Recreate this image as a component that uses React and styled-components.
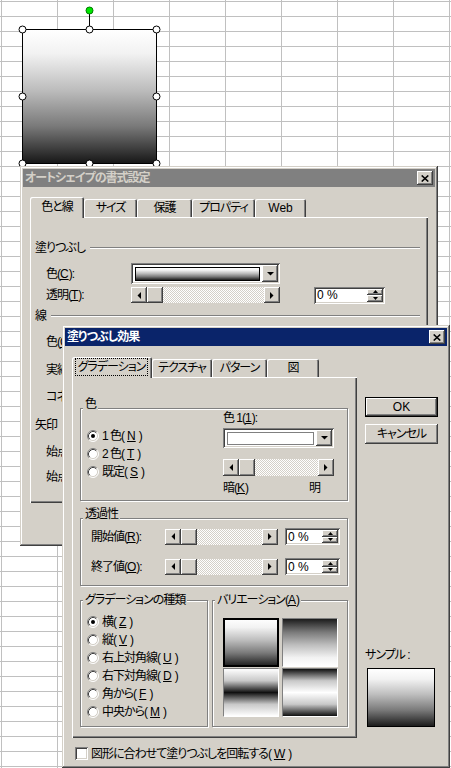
import React from "react";
import styled, { createGlobalStyle } from "styled-components";

const FACE = "#d4d0c8";
const raised = `inset -1px -1px #404040, inset 1px 1px #ffffff, inset -2px -2px #808080, inset 2px 2px ${FACE}`;
const sunken = `inset 1px 1px #808080, inset -1px -1px #ffffff, inset 2px 2px #404040, inset -2px -2px ${FACE}`;
const dither = `repeating-conic-gradient(#ffffff 0 25%, ${FACE} 0 50%) 0 0 / 2px 2px`;

const FILL_DOWN = "linear-gradient(to bottom, #ffffff 0%, #f2f2f2 18%, #bdbdbd 45%, #7a7a7a 72%, #1c1c1c 100%)";
const FILL_UP = "linear-gradient(to top, #ffffff 0%, #f2f2f2 18%, #bdbdbd 45%, #7a7a7a 72%, #1c1c1c 100%)";
const FILL_MID_DARK = "linear-gradient(to bottom, #ffffff 0%, #c8c8c8 25%, #101010 50%, #c8c8c8 75%, #ffffff 100%)";
const FILL_MID_LIGHT = "linear-gradient(to bottom, #101010 0%, #c8c8c8 25%, #ffffff 50%, #c8c8c8 75%, #101010 100%)";

const GlobalStyle = createGlobalStyle`
  html, body { margin: 0; padding: 0; }
  body {
    font-family: "Liberation Sans", "Noto Sans CJK JP", sans-serif;
    font-size: 12px;
    line-height: 14px;
    color: #000;
    letter-spacing: -1px;
    font-feature-settings: "palt" 1;
    font-variant-east-asian: proportional-width;
    text-autospace: no-autospace;
  }
  * { box-sizing: border-box; }
`;

const Desktop = styled.div`
  position: relative;
  width: 451px;
  height: 768px;
  overflow: hidden;
  background-color: #fff;
  background-image:
    linear-gradient(to right, transparent 1px, #c0c0c0 1px, #c0c0c0 2px, transparent 2px),
    linear-gradient(to bottom, transparent 1px, #c0c0c0 1px, #c0c0c0 2px, transparent 2px);
  background-size: 56px 100%, 100% 15px;
`;

const ShapeCanvas = styled.svg`
  position: absolute;
  left: 0;
  top: 0;
`;

const Window = styled.div`
  position: absolute;
  left: ${p => p.$x}px;
  top: ${p => p.$y}px;
  width: ${p => p.$w}px;
  height: ${p => p.$h}px;
  padding: 3px;
  background: ${FACE};
  box-shadow: inset -1px -1px #404040, inset 1px 1px ${FACE}, inset -2px -2px #808080, inset 2px 2px #ffffff;
  display: flex;
  flex-direction: column;
`;

const TitleBar = styled.div`
  flex: none;
  height: 18px;
  display: flex;
  align-items: center;
  justify-content: space-between;
  padding: 0 2px;
  background: ${p => (p.$active ? "#0a246a" : "#808080")};
  color: ${p => (p.$active ? "#ffffff" : FACE)};
  font-weight: bold;
`;

const CloseBox = styled.div`
  width: 16px;
  height: 14px;
  background: ${FACE};
  box-shadow: ${raised};
  display: flex;
  align-items: center;
  justify-content: center;
  padding-right: 1px;
`;

const DialogBody = styled.div`
  flex: 1;
  display: flex;
  flex-direction: column;
  padding: ${p => p.$pt}px 0 0 7px;
`;

const TabRow = styled.div`
  display: flex;
  align-items: flex-end;
  height: 20px;
  position: relative;
  z-index: 1;
`;

const Tab = styled.div`
  flex: none;
  width: ${p => p.$w}px;
  height: ${p => (p.$active ? 21 : 18)}px;
  margin-bottom: ${p => (p.$active ? -1 : 0)}px;
  padding: ${p => (p.$active ? "1px 0 2px" : "0")};
  display: flex;
  align-items: center;
  justify-content: center;
  background: ${FACE};
  border-radius: 2px 2px 0 0;
  box-shadow: inset 1px 1px #ffffff, inset -1px 0 #404040, inset -2px 0 #808080;
  white-space: nowrap;
`;

const LatinText = styled.span`
  letter-spacing: 0;
`;

const FocusRing = styled.span`
  flex: 1;
  align-self: stretch;
  margin: 0 4px 0 3px;
  border: 1px dotted #000;
  display: flex;
  align-items: center;
  justify-content: center;
`;

const TabPanel = styled.div`
  flex: none;
  width: ${p => p.$w}px;
  height: ${p => p.$h}px;
  background: ${FACE};
  box-shadow: inset 1px 1px #ffffff, inset -1px -1px #404040, inset -2px -2px #808080;
  padding: ${p => p.$pad};
  display: flex;
  flex-direction: column;
`;

const SectionHead = styled.div`
  display: flex;
  align-items: center;
  height: 14px;
  flex: none;
  margin-top: ${p => p.$mt || 0}px;
  white-space: nowrap;
  &::after {
    content: "";
    flex: 1;
    margin-left: 5px;
    border-top: 1px solid #808080;
    border-bottom: 1px solid #ffffff;
  }
`;

const FormRow = styled.div`
  display: flex;
  align-items: center;
  flex: none;
  height: ${p => p.$h}px;
  margin-top: ${p => p.$mt || 0}px;
  padding-left: ${p => p.$pl || 0}px;
`;

const FieldLabel = styled.span`
  flex: none;
  width: ${p => p.$w}px;
  white-space: nowrap;
`;

const Key = styled.span`
  text-decoration: underline;
  text-underline-offset: 1px;
  letter-spacing: 0;
`;

const ComboFrame = styled.div`
  flex: none;
  width: ${p => p.$w}px;
  height: ${p => p.$h}px;
  margin-top: ${p => p.$mt || 0}px;
  padding: 2px;
  background: #fff;
  box-shadow: ${sunken};
  display: flex;
`;

const ComboValue = styled.div`
  flex: 1;
  margin: 2px 2px 1px 2px;
  border: 1px solid ${p => p.$edge};
  background: ${p => p.$fill};
`;

const BevelButton = styled.div`
  flex: none;
  width: 16px;
  background: ${FACE};
  box-shadow: ${raised};
  display: flex;
  align-items: center;
  justify-content: center;
`;

const ScrollFrame = styled.div`
  flex: none;
  width: ${p => p.$w}px;
  height: ${p => p.$h}px;
  margin-top: ${p => p.$mt || 0}px;
  display: flex;
`;

const ScrollTrack = styled.div`
  flex: 1;
  background: ${dither};
`;

const SpinFrame = styled.div`
  flex: none;
  width: ${p => p.$w}px;
  height: ${p => p.$h}px;
  margin-left: ${p => p.$ml || 0}px;
  padding: 2px;
  background: #fff;
  box-shadow: ${sunken};
  display: flex;
`;

const SpinText = styled.span`
  flex: 1;
  display: flex;
  align-items: center;
  padding-left: 1px;
  white-space: nowrap;
  letter-spacing: 0;
`;

const SpinButtons = styled.div`
  flex: none;
  width: 16px;
  display: flex;
  flex-direction: column;
`;

const SpinButton = styled(BevelButton)`
  flex: 1;
  width: auto;
`;

const Group = styled.div`
  position: relative;
  flex: none;
  width: ${p => (p.$w ? `${p.$w}px` : "auto")};
  height: ${p => p.$h}px;
  margin-top: ${p => p.$mt || 0}px;
  padding: ${p => p.$pad || 0};
  border: 1px solid #808080;
  box-shadow: inset 1px 1px #ffffff, 1px 1px #ffffff;
`;

const Legend = styled.span`
  position: absolute;
  left: 2px;
  top: ${p => p.$top}px;
  padding: 0 2px;
  background: ${FACE};
  white-space: nowrap;
`;

const ColorGroupBody = styled.div`
  display: flex;
`;

const RadioList = styled.div`
  flex: none;
  width: ${p => (p.$w ? `${p.$w}px` : "auto")};
  padding: ${p => p.$pt}px 0 0 ${p => p.$pl || 0}px;
  display: flex;
  flex-direction: column;
`;

const RadioRow = styled.label`
  display: flex;
  align-items: center;
  gap: 3px;
  height: 18px;
  white-space: nowrap;
`;

const ColorPicker = styled.div`
  flex: none;
  width: 111px;
  padding-top: 2px;
  display: flex;
  flex-direction: column;
`;

const ScaleLabels = styled.div`
  display: flex;
  justify-content: space-between;
  margin-top: 5px;
  padding-right: 14px;
`;

const TransparencyBody = styled.div`
  display: flex;
  flex-direction: column;
  gap: 13px;
`;

const GroupPair = styled.div`
  display: flex;
  gap: 4px;
  margin-top: 14px;
`;

const VariationGrid = styled.div`
  display: grid;
  grid-template-columns: 56px 56px;
  grid-auto-rows: 49px;
  column-gap: 3px;
  row-gap: 1px;
`;

const VariationTile = styled.div`
  background: ${p => p.$fill};
  border: 1px solid;
  border-color: ${p => (p.$selected ? "#000" : "#808080 #ffffff #ffffff #808080")};
  box-shadow: ${p => (p.$selected ? "inset 0 0 0 1px #000" : "none")};
`;

const ContentRow = styled.div`
  display: flex;
  gap: 8px;
`;

const TabColumn = styled.div`
  display: flex;
  flex-direction: column;
`;

const SideColumn = styled.div`
  width: 73px;
  display: flex;
  flex-direction: column;
  padding: 40px 0 11px;
`;

const PushButton = styled.div`
  height: 20px;
  margin-top: ${p => p.$mt || 0}px;
  display: flex;
  align-items: center;
  justify-content: center;
  background: ${FACE};
  box-shadow: ${p =>
    p.$default
      ? "inset 0 0 0 1px #000, inset -2px -2px #404040, inset 2px 2px #ffffff, inset -3px -3px #808080"
      : raised};
`;

const Spacer = styled.div`
  flex: 1;
`;

const SampleBox = styled.div`
  width: 68px;
  height: 59px;
  margin: 6px 0 0 2px;
  border: 1px solid #000;
  background: ${FILL_DOWN};
`;

const CheckRow = styled.label`
  display: flex;
  align-items: center;
  gap: 3px;
  margin-top: 9px;
  padding-left: 3px;
  height: 13px;
  white-space: nowrap;
`;

const CheckBox = styled.span`
  flex: none;
  width: 13px;
  height: 13px;
  background: #fff;
  box-shadow: ${sunken};
`;

function CloseGlyph() {
  return (
    <svg width="8" height="7" viewBox="0 0 8 7">
      <path d="M0.7 0.5 L7.3 6.5 M7.3 0.5 L0.7 6.5" stroke="#000" strokeWidth="1.6" />
    </svg>
  );
}

function Arrow({ dir }) {
  const shapes = {
    left: [4, 7, "4,0 4,7 0.5,3.5"],
    right: [4, 7, "0,0 0,7 3.5,3.5"],
    down: [7, 4, "0,0 7,0 3.5,3.5"],
  };
  const [w, h, pts] = shapes[dir];
  return (
    <svg width={w} height={h} viewBox={`0 0 ${w} ${h}`}>
      <polygon points={pts} fill="#000" />
    </svg>
  );
}

function SmallArrow({ up }) {
  return (
    <svg width="5" height="3" viewBox="0 0 5 3">
      <polygon points={up ? "0,3 5,3 2.5,0" : "0,0 5,0 2.5,3"} fill="#000" />
    </svg>
  );
}

function Radio({ checked }) {
  return (
    <svg width="12" height="12" viewBox="0 0 12 12" style={{ flex: "none" }}>
      <circle cx="6" cy="6" r="5" fill="#fff" />
      <path d="M2.11 9.89 A5.5 5.5 0 0 1 9.89 2.11" fill="none" stroke="#808080" />
      <path d="M2.82 9.18 A4.5 4.5 0 0 1 9.18 2.82" fill="none" stroke="#404040" />
      <path d="M9.89 2.11 A5.5 5.5 0 0 1 2.11 9.89" fill="none" stroke="#ffffff" />
      <path d="M9.18 2.82 A4.5 4.5 0 0 1 2.82 9.18" fill="none" stroke={FACE} />
      {checked && <circle cx="6" cy="6" r="2" fill="#000" />}
    </svg>
  );
}

function Combo({ w, h, mt, fill, edge }) {
  return (
    <ComboFrame $w={w} $h={h} $mt={mt}>
      <ComboValue $fill={fill} $edge={edge} />
      <BevelButton>
        <Arrow dir="down" />
      </BevelButton>
    </ComboFrame>
  );
}

function HScroll({ w, h, mt }) {
  return (
    <ScrollFrame $w={w} $h={h} $mt={mt}>
      <BevelButton>
        <Arrow dir="left" />
      </BevelButton>
      <BevelButton />
      <ScrollTrack />
      <BevelButton>
        <Arrow dir="right" />
      </BevelButton>
    </ScrollFrame>
  );
}

function Spin({ w, h, ml }) {
  return (
    <SpinFrame $w={w} $h={h} $ml={ml}>
      <SpinText>0 %</SpinText>
      <SpinButtons>
        <SpinButton>
          <SmallArrow up />
        </SpinButton>
        <SpinButton>
          <SmallArrow />
        </SpinButton>
      </SpinButtons>
    </SpinFrame>
  );
}

function AutoShape() {
  const handles = [
    [22.5, 29.5], [89.5, 29.5], [156.5, 29.5],
    [22.5, 96.5], [156.5, 96.5],
    [22.5, 163.5], [89.5, 163.5], [156.5, 163.5],
  ];
  return (
    <ShapeCanvas width="170" height="170" viewBox="0 0 170 170">
      <defs>
        <linearGradient id="shapeFill" x1="0" y1="0" x2="0" y2="1">
          <stop offset="0" stopColor="#ffffff" />
          <stop offset="0.18" stopColor="#f2f2f2" />
          <stop offset="0.45" stopColor="#bdbdbd" />
          <stop offset="0.72" stopColor="#7a7a7a" />
          <stop offset="1" stopColor="#161616" />
        </linearGradient>
      </defs>
      <rect x="22.5" y="29.5" width="134" height="134" fill="url(#shapeFill)" stroke="#000" />
      <line x1="89.5" y1="14" x2="89.5" y2="29.5" stroke="#000" />
      <circle cx="89.5" cy="10.5" r="3.5" fill="#00e600" stroke="#007a00" />
      {handles.map(([x, y]) => (
        <circle key={`${x}-${y}`} cx={x} cy={y} r="3.5" fill="#fff" stroke="#000" />
      ))}
    </ShapeCanvas>
  );
}

const GRADIENT_TYPES = [
  ["横", "Z", true],
  ["縦", "V"],
  ["右上対角線", "U"],
  ["右下対角線", "D"],
  ["角から", "F"],
  ["中央から", "M"],
];

export default function App() {
  return (
    <>
      <GlobalStyle />
      <Desktop>
        <AutoShape />

        <Window $x={20} $y={166} $w={418} $h={380}>
          <TitleBar>
            <span>オートシェイプの書式設定</span>
            <CloseBox>
              <CloseGlyph />
            </CloseBox>
          </TitleBar>
          <DialogBody $pt={10}>
            <TabRow>
              <Tab $w={54} $active>色と線</Tab>
              <Tab $w={53}>サイズ</Tab>
              <Tab $w={55}>保護</Tab>
              <Tab $w={63}>プロパティ</Tab>
              <Tab $w={51}><LatinText>Web</LatinText></Tab>
            </TabRow>
            <TabPanel $w={398} $h={286} $pad="24px 8px 0 5px">
              <SectionHead>塗りつぶし</SectionHead>
              <FormRow $h={21} $mt={8} $pl={11}>
                <FieldLabel $w={85}>色(<Key>C</Key>):</FieldLabel>
                <Combo w={149} h={21} fill={FILL_DOWN} edge="#000" />
              </FormRow>
              <FormRow $h={16} $mt={3} $pl={11}>
                <FieldLabel $w={85}>透明(<Key>T</Key>):</FieldLabel>
                <HScroll w={149} h={16} />
                <Spin w={71} h={17} ml={34} />
              </FormRow>
              <SectionHead $mt={6}>線</SectionHead>
              <FormRow $h={21} $mt={8} $pl={11}>
                <FieldLabel $w={85}>色(<Key>O</Key>):</FieldLabel>
                <Combo w={149} h={21} fill="#000" edge="#000" />
              </FormRow>
              <FormRow $h={21} $mt={7} $pl={11}>
                <FieldLabel $w={85}>実線(<Key>D</Key>):</FieldLabel>
                <Combo w={149} h={21} fill="#fff" edge="#fff" />
              </FormRow>
              <FormRow $h={21} $mt={6} $pl={11}>
                <FieldLabel $w={85}>コネクタ(<Key>N</Key>):</FieldLabel>
                <Combo w={149} h={21} fill="#fff" edge="#fff" />
              </FormRow>
              <SectionHead $mt={11}>矢印</SectionHead>
              <FormRow $h={21} $mt={9} $pl={11}>
                <FieldLabel $w={85}>始点のスタイル(<Key>B</Key>):</FieldLabel>
              </FormRow>
              <FormRow $h={21} $mt={4} $pl={11}>
                <FieldLabel $w={85}>始点のサイズ(<Key>I</Key>):</FieldLabel>
              </FormRow>
            </TabPanel>
          </DialogBody>
        </Window>

        <Window $x={62} $y={325} $w={388} $h={443}>
          <TitleBar $active>
            <span>塗りつぶし効果</span>
            <CloseBox>
              <CloseGlyph />
            </CloseBox>
          </TitleBar>
          <DialogBody $pt={11}>
            <ContentRow>
              <TabColumn>
                <TabRow>
                  <Tab $w={80} $active>
                    <FocusRing>グラデーション</FocusRing>
                  </Tab>
                  <Tab $w={60}>テクスチャ</Tab>
                  <Tab $w={55}>パターン</Tab>
                  <Tab $w={52}>図</Tab>
                </TabRow>
                <TabPanel $w={285} $h={361} $pad="31px 9px 0 8px">
                  <Group $h={93}>
                    <Legend $top={-12}>色</Legend>
                    <ColorGroupBody>
                      <RadioList $w={142} $pt={18} $pl={6}>
                        <RadioRow>
                          <Radio checked />1 色(<Key>N</Key>)
                        </RadioRow>
                        <RadioRow>
                          <Radio />2 色(<Key>T</Key>)
                        </RadioRow>
                        <RadioRow>
                          <Radio />既定(<Key>S</Key>)
                        </RadioRow>
                      </RadioList>
                      <ColorPicker>
                        <span>色 1(<Key>1</Key>):</span>
                        <Combo w={111} h={20} mt={3} fill="#fff" edge="#808080" />
                        <HScroll w={111} h={17} mt={11} />
                        <ScaleLabels>
                          <span>暗(<Key>K</Key>)</span>
                          <span>明</span>
                        </ScaleLabels>
                      </ColorPicker>
                    </ColorGroupBody>
                  </Group>

                  <Group $h={68} $mt={17} $pad="9px 0 0 10px">
                    <Legend $top={-12}>透過性</Legend>
                    <TransparencyBody>
                      <FormRow $h={17}>
                        <FieldLabel $w={74}>開始値(<Key>R</Key>):</FieldLabel>
                        <HScroll w={113} h={16} />
                        <Spin w={55} h={17} ml={7} />
                      </FormRow>
                      <FormRow $h={17}>
                        <FieldLabel $w={74}>終了値(<Key>O</Key>):</FieldLabel>
                        <HScroll w={113} h={16} />
                        <Spin w={55} h={17} ml={7} />
                      </FormRow>
                    </TransparencyBody>
                  </Group>

                  <GroupPair>
                    <Group $w={128} $h={127} $pad="12px 0 0 6px">
                      <Legend $top={-8}>グラデーションの種類</Legend>
                      <RadioList $pt={0}>
                        {GRADIENT_TYPES.map(([label, key, on]) => (
                          <RadioRow key={key}>
                            <Radio checked={on} />
                            {label}(<Key>{key}</Key>)
                          </RadioRow>
                        ))}
                      </RadioList>
                    </Group>
                    <Group $w={136} $h={127} $pad="17px 0 0 10px">
                      <Legend $top={-8}>
                        バリエーション(<Key>A</Key>)
                      </Legend>
                      <VariationGrid>
                        <VariationTile $fill={FILL_DOWN} $selected />
                        <VariationTile $fill={FILL_UP} />
                        <VariationTile $fill={FILL_MID_DARK} />
                        <VariationTile $fill={FILL_MID_LIGHT} />
                      </VariationGrid>
                    </Group>
                  </GroupPair>
                </TabPanel>
              </TabColumn>

              <SideColumn>
                <PushButton $default><LatinText>OK</LatinText></PushButton>
                <PushButton $mt={7}>キャンセル</PushButton>
                <Spacer />
                <span>サンプル :</span>
                <SampleBox />
              </SideColumn>
            </ContentRow>

            <CheckRow>
              <CheckBox />
              図形に合わせて塗りつぶしを回転する(<Key>W</Key>)
            </CheckRow>
          </DialogBody>
        </Window>
      </Desktop>
    </>
  );
}
